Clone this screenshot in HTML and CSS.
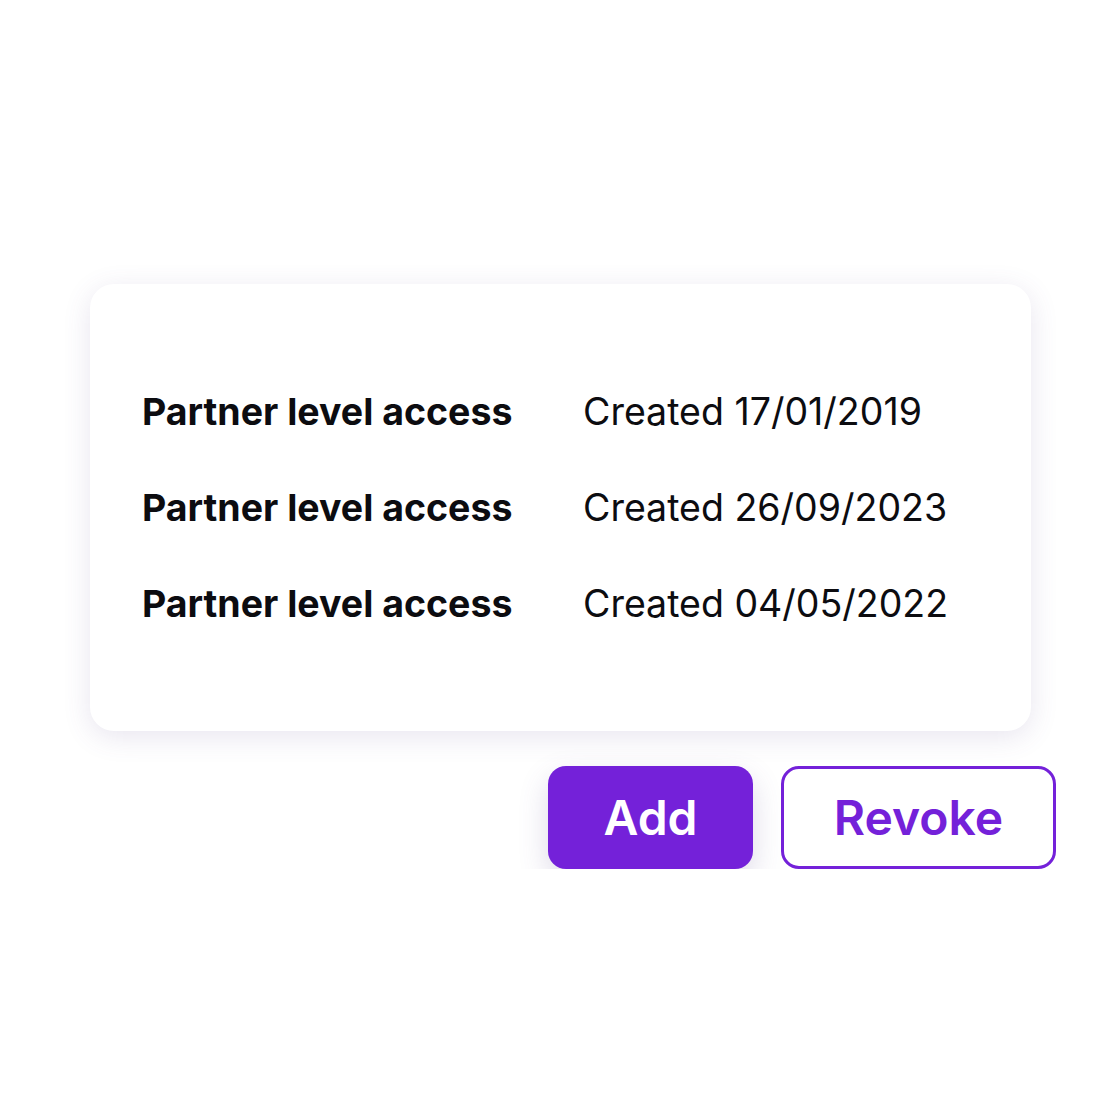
FILE: index.html
```html
<!DOCTYPE html>
<html lang="en">
<head>
    <meta charset="UTF-8">
    <meta name="viewport" content="width=device-width, initial-scale=1.0">
    <title>Access Keys</title>
    <link rel="stylesheet" href="styles.css">
</head>
<body>
    <div class="wrapper">
        <div class="card">
            <div class="access-row">
                <span class="access-name">Partner level access</span>
                <span class="access-date">Created 17/01/2019</span>
            </div>
            <div class="access-row">
                <span class="access-name">Partner level access</span>
                <span class="access-date">Created 26/09/2023</span>
            </div>
            <div class="access-row">
                <span class="access-name">Partner level access</span>
                <span class="access-date">Created 04/05/2022</span>
            </div>
        </div>

        <div class="actions">
            <button class="btn btn-add">Add</button>
            <button class="btn btn-revoke">Revoke</button>
        </div>
    </div>
</body>
</html>
```

FILE: styles.css
```css
/* General Styling */
* {
    margin: 0;
    padding: 0;
    box-sizing: border-box;
    font-family: Inter, 'Noto Sans', sans-serif;
}

body {
    background-color: #ffffff;
    padding: 284px 0 0 90px;
}

.wrapper {
    width: 966px;
}

/* Card Styling */
.card {
    width: 941px;
    height: 447px;
    background: #ffffff;
    border-radius: 24px;
    box-shadow: 0 6px 28px rgba(90, 70, 140, 0.14);
    padding: 79px 0 0 52px;
    display: flex;
    flex-direction: column;
}

.access-row {
    display: flex;
    align-items: center;
    height: 96px;
}

.access-name {
    width: 441px;
    font-size: 37.5px;
    font-weight: 700;
    color: #0c0c10;
}

.access-date {
    font-size: 37.5px;
    font-weight: 400;
    color: #0c0c10;
}

/* Button Styling */
.actions {
    display: flex;
    justify-content: flex-end;
    gap: 28px;
    margin-top: 35px;
}

.btn {
    height: 103px;
    border-radius: 18px;
    font-size: 48px;
    font-weight: 600;
    cursor: pointer;
}

.btn-add {
    width: 205px;
    border: none;
    color: #ffffff;
    background-color: #7421d9;
    box-shadow: 0 12px 30px rgba(90, 70, 140, 0.2);
}

.btn-revoke {
    width: 275px;
    border: 3px solid #7421d9;
    color: #7421d9;
    background-color: #ffffff;
}
```
